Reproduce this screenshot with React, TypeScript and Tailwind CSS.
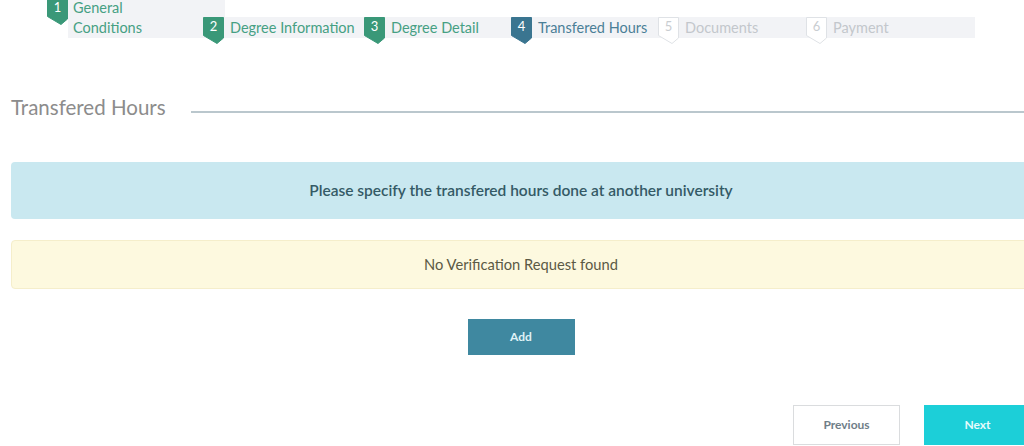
import React from 'react'

type Step = { n: number; label: string; state: 'done' | 'current' | 'todo'; width: string }

const steps: Step[] = [
  { n: 2, label: 'Degree Information', state: 'done', width: 'w-[161px]' },
  { n: 3, label: 'Degree Detail', state: 'done', width: 'w-[147px]' },
  { n: 4, label: 'Transfered Hours', state: 'current', width: 'w-[147px]' },
  { n: 5, label: 'Documents', state: 'todo', width: 'w-[148px]' },
  { n: 6, label: 'Payment', state: 'todo', width: 'w-[147px]' },
]

function Badge({ n, state }: { n: number; state: Step['state'] }) {
  const fill = state === 'done' ? '#3a9878' : state === 'current' ? '#3a7590' : '#ffffff'
  const stroke = state === 'todo' ? '#dfe2e6' : fill
  const color = state === 'todo' ? 'text-[#c9cdd1]' : 'text-white'
  return (
    <div className="relative w-[21px] h-[27px]">
      <svg width="21" height="27" viewBox="0 0 21 27" className="absolute inset-0">
        <polygon points="0.5,0.5 20.5,0.5 20.5,21 14,26.5 0.5,18.5" fill={fill} stroke={stroke} strokeWidth="1" />
      </svg>
      <span className={`absolute left-0 top-0 w-[21px] h-[19px] flex items-center justify-center text-[13px] leading-none ${color}`}>
        {n}
      </span>
    </div>
  )
}

export default function App() {
  const labelColor = (s: Step['state']) =>
    s === 'done' ? 'text-[#46a083]' : s === 'current' ? 'text-[#4b7f97]' : 'text-[#c3c7cc]'

  return (
    <div
      className="w-[1024px] h-[446px] overflow-hidden bg-white"
      style={{ fontFamily: 'Lato, "Noto Sans", sans-serif' }}
    >
      {/* stepper */}
      <div className="flex items-end ml-[47px] -mt-[2px] text-[14.5px]">
        <div className="flex items-start">
          <Badge n={1} state="done" />
          <div className="w-[157px] h-[40px] bg-[#f2f3f6] pl-[5px] text-[#46a083]">
            <div className="leading-[19px]">General</div>
            <div className="leading-[21px]">Conditions</div>
          </div>
        </div>
        {steps.map((s) => (
          <div key={s.n} className={`relative h-[21px] bg-[#f2f3f6] ${s.width}`}>
            <div className="absolute -left-[22px] top-0">
              <Badge n={s.n} state={s.state} />
            </div>
            <div className={`pl-[5px] leading-[21px] whitespace-nowrap ${labelColor(s.state)}`}>{s.label}</div>
          </div>
        ))}
      </div>

      <div className="ml-[11px] w-[1020px]">
        {/* section heading */}
        <div className="flex items-center mt-[57px]">
          <h2 className="text-[20.5px] leading-[24px] text-[#8c8c8c] whitespace-nowrap">Transfered Hours</h2>
          <div className="flex-1 h-[2px] bg-[#bac7cd] ml-[25px] mt-[9px]" />
        </div>

        {/* info alert */}
        <div className="mt-[43px] h-[57px] rounded bg-[#c9e8f0] flex items-center justify-center text-[15.5px] font-semibold text-[#345a66]">
          Please specify the transfered hours done at another university
        </div>

        {/* warning alert */}
        <div className="mt-[21px] h-[49px] rounded bg-[#fdf9df] border border-[#f5eecb] flex items-center justify-center text-[14.7px] text-[#5b5a45]">
          No Verification Request found
        </div>

        <div className="flex justify-center mt-[30px]">
          <button className="w-[107px] h-[36px] bg-[#3f88a0] text-[#dff2f7] text-[12px] font-bold">Add</button>
        </div>

        <div className="flex justify-end gap-[24px] mt-[50px]">
          <button className="w-[107px] h-[40px] border border-[#dadcde] bg-white text-[#6f7e88] text-[12px] font-bold">
            Previous
          </button>
          <button className="w-[107px] h-[40px] bg-[#1ccfd8] text-[#e6fbfc] text-[12px] font-bold">Next</button>
        </div>
      </div>
    </div>
  )
}
